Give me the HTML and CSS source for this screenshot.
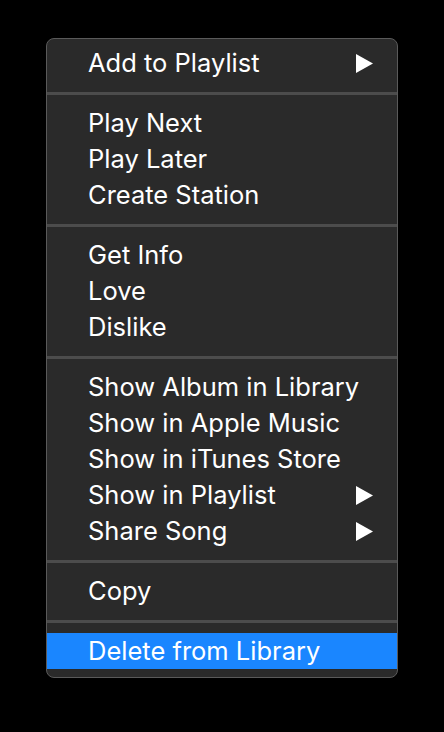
FILE: index.html
```html
<!DOCTYPE html>
<html>
<head>
<meta charset="utf-8">
<link rel="stylesheet" href="styles.css">
</head>
<body>
<div class="menu">
  <div class="item"><span class="label">Add to Playlist</span><svg class="arrow" viewBox="0 0 17 19"><polygon points="0,0 17,9.5 0,19"/></svg></div>
  <div class="sep"></div>
  <div class="item"><span class="label">Play Next</span></div>
  <div class="item"><span class="label">Play Later</span></div>
  <div class="item"><span class="label">Create Station</span></div>
  <div class="sep"></div>
  <div class="item"><span class="label">Get Info</span></div>
  <div class="item"><span class="label">Love</span></div>
  <div class="item"><span class="label">Dislike</span></div>
  <div class="sep"></div>
  <div class="item"><span class="label">Show Album in Library</span></div>
  <div class="item"><span class="label">Show in Apple Music</span></div>
  <div class="item"><span class="label">Show in iTunes Store</span></div>
  <div class="item"><span class="label">Show in Playlist</span><svg class="arrow" viewBox="0 0 17 19"><polygon points="0,0 17,9.5 0,19"/></svg></div>
  <div class="item"><span class="label">Share Song</span><svg class="arrow" viewBox="0 0 17 19"><polygon points="0,0 17,9.5 0,19"/></svg></div>
  <div class="sep"></div>
  <div class="item"><span class="label">Copy</span></div>
  <div class="sep"></div>
  <div class="item selected"><span class="label">Delete from Library</span></div>
</div>
</body>
</html>
```
FILE: styles.css
```css
html, body {
  margin: 0;
  padding: 0;
  background: #000;
}
body {
  padding: 38px 0 0 46px;
  font-family: Inter, "Noto Sans", sans-serif;
}
.menu {
  width: 350px;
  border: 1px solid #5a5a5a;
  border-radius: 8px;
  background: #2a2a2a;
  padding: 6px 0 8px;
  box-sizing: content-box;
}
.item {
  height: 36px;
  display: flex;
  align-items: center;
  justify-content: space-between;
  padding: 0 24px 0 41px;
  color: #fff;
  font-size: 25.5px;
  line-height: 36px;
}
.item.selected {
  background: #1a86ff;
}
.arrow {
  width: 17px;
  height: 19px;
  fill: #fff;
}
.sep {
  height: 3px;
  margin: 11px 0 10px;
  background: #4c4c4c;
}
```
